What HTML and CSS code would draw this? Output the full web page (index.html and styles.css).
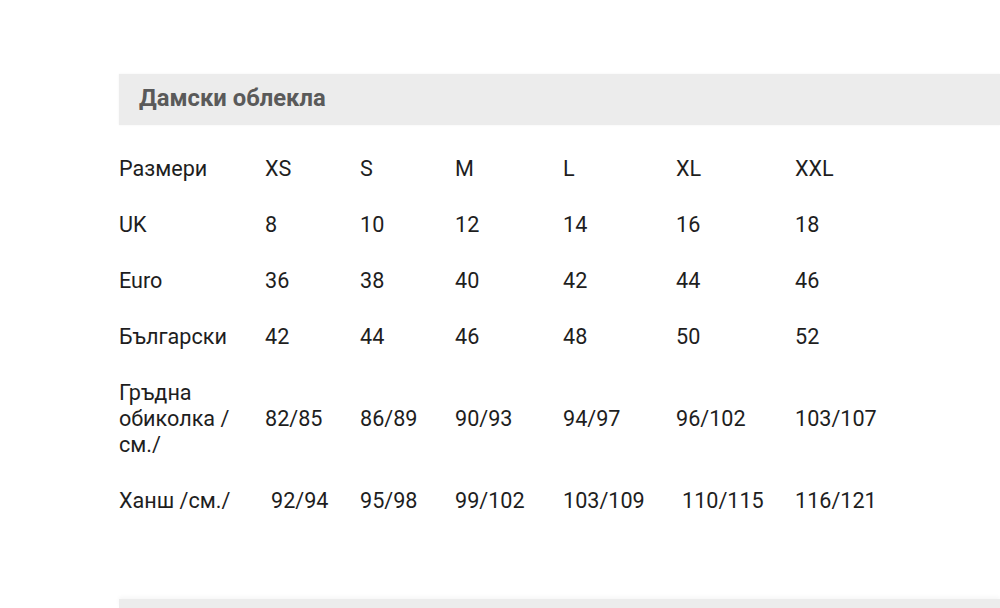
FILE: index.html
```html
<!DOCTYPE html>
<html lang="bg">
<head>
<meta charset="utf-8">
<link rel="stylesheet" href="styles.css">
</head>
<body>
<div class="page">
  <section class="section">
    <h2 class="section-title">Дамски облекла</h2>
    <table class="sizes">
      <colgroup>
        <col class="c-label"><col class="c-xs"><col class="c-s"><col class="c-m"><col class="c-l"><col class="c-xl"><col class="c-xxl">
      </colgroup>
      <tbody>
        <tr><td>Размери</td><td>XS</td><td>S</td><td>M</td><td>L</td><td>XL</td><td>XXL</td></tr>
        <tr><td>UK</td><td>8</td><td>10</td><td>12</td><td>14</td><td>16</td><td>18</td></tr>
        <tr><td>Euro</td><td>36</td><td>38</td><td>40</td><td>42</td><td>44</td><td>46</td></tr>
        <tr><td>Български</td><td>42</td><td>44</td><td>46</td><td>48</td><td>50</td><td>52</td></tr>
        <tr><td class="wrap">Гръдна обиколка / см./</td><td>82/85</td><td>86/89</td><td>90/93</td><td>94/97</td><td>96/102</td><td>103/107</td></tr>
        <tr><td>Ханш /см./</td><td><span class="indent">92/94</span></td><td>95/98</td><td>99/102</td><td>103/109</td><td><span class="indent">110/115</span></td><td>116/121</td></tr>
      </tbody>
    </table>
  </section>
  <section class="section next">
    <div class="section-bar"></div>
  </section>
</div>
</body>
</html>
```
FILE: styles.css
```css
html, body {
  margin: 0;
  padding: 0;
  background: #ffffff;
}
body {
  font-family: Roboto, "Noto Sans", Arial, sans-serif;
  color: #1e1e1e;
  height: 608px;
  overflow: hidden;
}
.page {
  padding: 74px 0 0 119px;
}
.section-title {
  margin: 0;
  height: 51px;
  box-sizing: border-box;
  padding: 0 0 3px 20px;
  display: flex;
  align-items: center;
  background: #ececec;
  box-shadow: 0 0 2px rgba(0, 0, 0, 0.06);
  font-size: 23.8px;
  font-weight: 700;
  color: #5a5a5a;
}
.sizes {
  margin-top: 16px;
  border-collapse: collapse;
  table-layout: fixed;
  width: 860px;
  font-size: 21.6px;
  line-height: 26px;
}
.sizes td {
  padding: 15px 0;
  vertical-align: middle;
  white-space: nowrap;
}
.sizes td.wrap {
  white-space: normal;
  padding-right: 20px;
}
.c-label { width: 146px; }
.c-xs { width: 95px; }
.c-s { width: 95px; }
.c-m { width: 108px; }
.c-l { width: 113px; }
.c-xl { width: 119px; }
.c-xxl { width: 184px; }
.indent {
  padding-left: 6px;
}
.next {
  margin-top: 70px;
}
.section-bar {
  height: 9px;
  background: #ececec;
  box-shadow: 0 -2px 4px rgba(0, 0, 0, 0.04);
}
```
